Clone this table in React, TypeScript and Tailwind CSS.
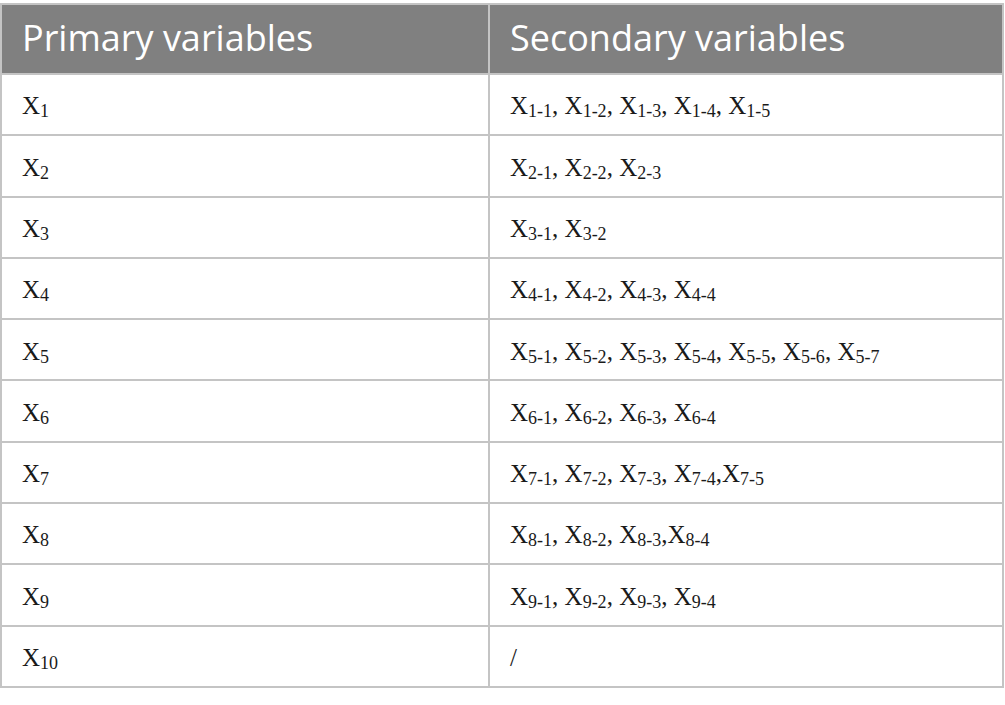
const rows: { primary: string; secondary: string[] | null; sep?: string[] }[] = [
  { primary: '1', secondary: ['1-1', '1-2', '1-3', '1-4', '1-5'] },
  { primary: '2', secondary: ['2-1', '2-2', '2-3'] },
  { primary: '3', secondary: ['3-1', '3-2'] },
  { primary: '4', secondary: ['4-1', '4-2', '4-3', '4-4'] },
  { primary: '5', secondary: ['5-1', '5-2', '5-3', '5-4', '5-5', '5-6', '5-7'] },
  { primary: '6', secondary: ['6-1', '6-2', '6-3', '6-4'] },
  { primary: '7', secondary: ['7-1', '7-2', '7-3', '7-4', '7-5'], sep: [', ', ', ', ', ', ','] },
  { primary: '8', secondary: ['8-1', '8-2', '8-3', '8-4'], sep: [', ', ', ', ','] },
  { primary: '9', secondary: ['9-1', '9-2', '9-3', '9-4'] },
  { primary: '10', secondary: null },
]

function Var({ sub }: { sub: string }) {
  return (
    <span>
      X<sub className="relative top-[3px] align-baseline text-[18px] leading-none">{sub}</sub>
    </span>
  )
}

export default function App() {
  return (
    <div className="bg-white pt-[3px] pb-[18px]">
      <table className="w-[1004px] table-fixed border-collapse border-2 border-[#c4c4c4]">
        <colgroup>
          <col className="w-[488px]" />
          <col />
        </colgroup>
        <thead>
          <tr className="h-[70px] bg-[#808080] text-left font-['Open_Sans',sans-serif] text-[36px] font-normal text-white">
            <th className="border-2 border-[#c4c4c4] px-[20px] pb-[2px] font-normal">Primary variables</th>
            <th className="border-2 border-[#c4c4c4] px-[20px] pb-[2px] font-normal">Secondary variables</th>
          </tr>
        </thead>
        <tbody className="font-['Liberation_Serif',serif] text-[25px] text-[#1a1a1a]">
          {rows.map((row) => (
            <tr key={row.primary} className="h-[61.3px]">
              <td className="border-2 border-[#c4c4c4] px-[20px] pt-[3px]">
                <Var sub={row.primary} />
              </td>
              <td className="border-2 border-[#c4c4c4] px-[20px] pt-[3px]">
                {row.secondary
                  ? row.secondary.map((s, i) => (
                      <span key={s}>
                        <Var sub={s} />
                        {i < row.secondary!.length - 1 && (row.sep ? row.sep[i] : ', ')}
                      </span>
                    ))
                  : '/'}
              </td>
            </tr>
          ))}
        </tbody>
      </table>
    </div>
  )
}
